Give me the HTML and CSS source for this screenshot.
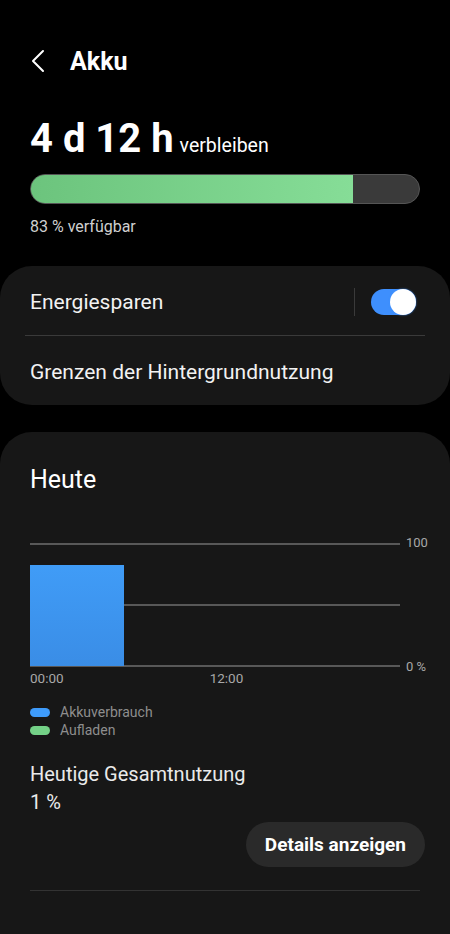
FILE: index.html
```html
<!DOCTYPE html>
<html lang="de">
<head>
    <meta charset="UTF-8">
    <meta name="viewport" content="width=device-width, initial-scale=1.0">
    <title>Akku</title>
    <link rel="stylesheet" href="styles.css">
</head>
<body>
    <header class="topbar">
        <svg class="back" width="16" height="24" viewBox="0 0 16 24">
            <path d="M13 2 L3 12 L13 22" fill="none" stroke="#fff" stroke-width="2" stroke-linecap="round" stroke-linejoin="round"/>
        </svg>
        <h1>Akku</h1>
    </header>

    <section class="summary">
        <div class="remaining">
            <span class="big">4 d 12 h</span>
            <span class="small">verbleiben</span>
        </div>
        <div class="battery">
            <div class="battery-fill" style="width: 83%"></div>
        </div>
        <div class="available">83 % verfügbar</div>
    </section>

    <section class="card settings">
        <div class="row">
            <span>Energiesparen</span>
            <div class="switch-wrap">
                <span class="vline"></span>
                <span class="switch"><span class="knob"></span></span>
            </div>
        </div>
        <div class="divider"></div>
        <div class="row">
            <span>Grenzen der Hintergrundnutzung</span>
        </div>
    </section>

    <section class="card today">
        <h2>Heute</h2>
        <div class="chart">
            <svg class="plot" width="370" height="124" viewBox="0 0 370 124">
                <line x1="0" y1="1" x2="370" y2="1" stroke="#6f6f6f" stroke-width="1.5"/>
                <line x1="0" y1="62" x2="370" y2="62" stroke="#6f6f6f" stroke-width="1.5"/>
                <line x1="0" y1="123" x2="370" y2="123" stroke="#6f6f6f" stroke-width="1.5"/>
                <defs>
                    <linearGradient id="barg" x1="0" y1="0" x2="0" y2="1">
                        <stop offset="0" stop-color="#409cf7"/>
                        <stop offset="1" stop-color="#3a8de6"/>
                    </linearGradient>
                </defs>
                <rect x="0" y="22" width="94" height="101" fill="url(#barg)"/>
            </svg>
            <div class="yaxis">
                <span>100</span>
                <span>0 %</span>
            </div>
        </div>
        <div class="xaxis">
            <span>00:00</span>
            <span>12:00</span>
        </div>

        <ul class="legend">
            <li><span class="dot blue"></span>Akkuverbrauch</li>
            <li><span class="dot green"></span>Aufladen</li>
        </ul>

        <div class="usage">
            <div class="usage-label">Heutige Gesamtnutzung</div>
            <div class="usage-value">1 %</div>
        </div>

        <div class="actions">
            <button class="details">Details anzeigen</button>
        </div>
        <div class="bottom-line"></div>
    </section>
</body>
</html>
```

FILE: styles.css
```css
body {
    margin: 0;
    background-color: #000;
    color: #fff;
    font-family: Roboto, "Noto Sans", sans-serif;
    width: 450px;
    height: 934px;
    overflow: hidden;
}

.topbar {
    display: flex;
    align-items: center;
    height: 36px;
    padding: 43px 0 0 30px;
}
.back {
    margin-right: 24px;
}
.topbar h1 {
    margin: 0;
    font-size: 25px;
    font-weight: 700;
}

.summary {
    padding: 0 30px;
    margin-top: 36px;
}
.remaining {
    display: flex;
    align-items: baseline;
    height: 48px;
}
.big {
    font-size: 40px;
    font-weight: 700;
    line-height: 48px;
}
.small {
    font-size: 19.5px;
    margin-left: 6px;
}
.battery {
    margin-top: 11px;
    height: 28px;
    border-radius: 15px;
    background-color: #3a3a3a;
    border: 1px solid #555;
    overflow: hidden;
}
.battery-fill {
    height: 100%;
    background: linear-gradient(to right, #6cc47d, #86dd97);
}
.available {
    margin-top: 13px;
    font-size: 16px;
    color: #cfcfcf;
}

.card {
    background-color: #171717;
    border-radius: 32px;
}
.settings {
    margin-top: 30px;
    padding: 0 25px;
}
.settings .row {
    box-sizing: border-box;
    display: flex;
    align-items: center;
    justify-content: space-between;
    height: 69px;
    padding: 2px 9px 0 5px;
    font-size: 21px;
    color: #f2f2f2;
}
.switch-wrap {
    display: flex;
    align-items: center;
}
.vline {
    width: 1px;
    height: 28px;
    background-color: #3a3a3a;
    margin-right: 16px;
}
.switch {
    display: flex;
    justify-content: flex-end;
    align-items: center;
    width: 45px;
    height: 26px;
    border-radius: 13px;
    background-color: #3e8ffd;
}
.knob {
    width: 26px;
    height: 26px;
    border-radius: 50%;
    background-color: #fff;
    box-shadow: 0 0 2px #3e8ffd;
}
.divider {
    height: 1px;
    background-color: #3a3a3a;
}

.today {
    margin-top: 27px;
    padding: 28px 30px 0;
    height: 480px;
    border-radius: 32px 32px 0 0;
}
.today h2 {
    margin: 0;
    font-size: 25px;
    font-weight: 400;
    line-height: 40px;
}
.chart {
    display: flex;
    margin-top: 43px;
}
.plot {
    display: block;
    flex-shrink: 0;
}
.yaxis {
    display: flex;
    flex-direction: column;
    justify-content: space-between;
    margin: -8px 0 -7px 6px;
    font-size: 13px;
    color: #a8a8a8;
    white-space: nowrap;
}
.xaxis {
    display: flex;
    gap: 146px;
    font-size: 13.5px;
    color: #a8a8a8;
    margin-top: 3px;
}
.legend {
    list-style: none;
    margin: 17px 0 0;
    padding: 0;
    font-size: 14px;
    color: #8e8e8e;
}
.legend li {
    display: flex;
    align-items: center;
    height: 18px;
}
.dot {
    width: 20px;
    height: 9px;
    border-radius: 5px;
    margin-right: 10px;
}
.dot.blue {
    background-color: #3e9bfb;
}
.dot.green {
    background-color: #74d187;
}
.usage {
    margin-top: 21px;
    color: #eaeaea;
    font-size: 20px;
}
.usage-label {
    line-height: 28px;
}
.usage-value {
    line-height: 28px;
}
.actions {
    display: flex;
    justify-content: flex-end;
    margin-top: 6px;
    margin-right: -5px;
}
.details {
    height: 45px;
    padding: 0 19px;
    border: none;
    border-radius: 23px;
    background-color: #2a2a2a;
    color: #fff;
    font-family: Roboto, sans-serif;
    font-size: 19px;
    font-weight: 700;
}
.bottom-line {
    height: 1px;
    background-color: #333;
    margin-top: 23px;
}
```
